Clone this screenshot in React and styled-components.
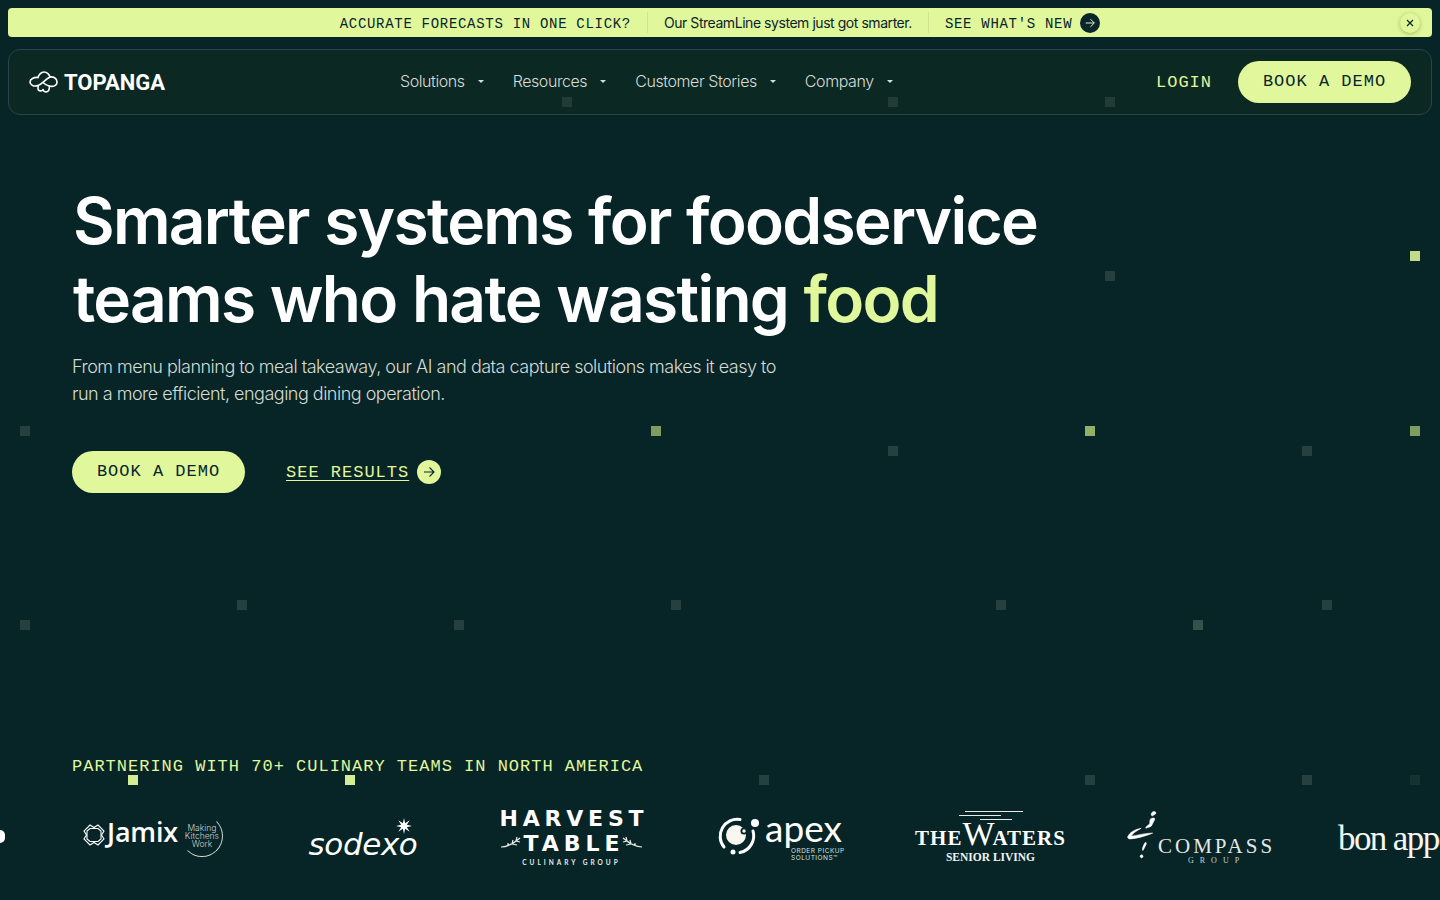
import React from 'react';
import styled, { createGlobalStyle } from 'styled-components';

const lime = '#e0f79b';
const ink = '#08252a';
const mono = '"Liberation Mono", monospace';
const sans = 'Inter, "Liberation Sans", sans-serif';
const serif = '"Liberation Serif", serif';

const Global = createGlobalStyle`
  html, body { margin: 0; padding: 0; background: #072426; }
  * { box-sizing: border-box; }
`;

const Page = styled.div`
  position: relative;
  width: 1440px;
  height: 900px;
  overflow: hidden;
  background: #072426;
  padding: 8px;
  font-family: ${sans};
  color: #fff;
`;

const Square = styled.i`
  position: absolute;
  width: 10px;
  height: 10px;
  left: ${p => p.$x - 5}px;
  top: ${p => p.$y - 5}px;
  background: ${p => p.$c};
`;

const Banner = styled.div`
  position: relative;
  height: 29px;
  border-radius: 4px;
  background: ${lime};
  display: flex;
  align-items: center;
  justify-content: center;
  color: ${ink};
`;
const BannerMono = styled.span`
  font: 400 14px/1 ${mono};
  letter-spacing: 0.7px;
  white-space: pre;
  position: relative;
  top: 1px;
`;
const BannerText = styled.span`
  font-size: 14px;
  letter-spacing: -0.45px;
  line-height: 1;
  padding: 0 16px;
  margin: 0 16px 0 16px;
  height: 21px;
  display: flex;
  align-items: center;
  border-left: 1px solid #cfe48e;
  border-right: 1px solid #cfe48e;
  font-weight: 400;
`;
const BannerLink = styled.span`
  display: flex;
  align-items: center;
  gap: 8px;
`;
const DarkDot = styled.span`
  width: 20px;
  height: 20px;
  border-radius: 50%;
  background: ${ink};
  display: flex;
  align-items: center;
  justify-content: center;
`;
const Close = styled.button`
  position: absolute;
  right: 12px;
  top: 5px;
  width: 20px;
  height: 20px;
  padding: 0;
  border: 0;
  border-radius: 50%;
  background: ${lime};
  box-shadow: 0 1px 4px rgba(90, 110, 40, .45);
  display: flex;
  align-items: center;
  justify-content: center;
`;

const Nav = styled.nav`
  position: relative;
  margin-top: 12px;
  height: 66px;
  border: 1px solid #2a4547;
  border-radius: 12px;
  background: rgba(25, 50, 30, .3);
  display: grid;
  grid-template-columns: 371px 1fr auto;
  align-items: center;
  padding: 0 20px 0 20px;
`;
const Brand = styled.div`
  display: flex;
  align-items: center;
  gap: 6px;
`;
const BrandName = styled.span`
  font: 700 22px/1 Roboto, ${sans};
  color: #fff;
  position: relative;
  top: 1px;
`;
const Menu = styled.div`
  display: flex;
  gap: 29px;
  position: relative;
  top: -1px;
`;
const MenuItem = styled.span`
  display: flex;
  align-items: center;
  gap: 13px;
  font-size: 16px;
  font-weight: 300;
  color: #d6ddd7;
  letter-spacing: -0.42px;
  line-height: 20px;
`;
const Caret = styled.i`
  width: 0;
  height: 0;
  border-left: 3.5px solid transparent;
  border-right: 3.5px solid transparent;
  border-top: 3.5px solid #d6ddd7;
`;
const Actions = styled.div`
  display: flex;
  align-items: center;
  gap: 26px;
`;
const Login = styled.span`
  font: 400 17px/1 ${mono};
  letter-spacing: 1px;
  color: ${lime};
`;
const Pill = styled.span`
  height: 42px;
  width: 173px;
  border-radius: 21px;
  background: ${lime};
  color: ${ink};
  font: 400 17px/42px ${mono};
  letter-spacing: 1px;
  text-align: center;
  white-space: pre;
  display: block;
`;

const Hero = styled.section`
  position: relative;
  padding: 67px 0 0 65px;
`;
const Title = styled.h1`
  margin: 0;
  font-size: 64px;
  line-height: 78px;
  font-weight: 600;
  letter-spacing: -1.72px;
  word-spacing: 1px;
  color: #fff;
`;
const Accent = styled.span`
  color: ${lime};
`;
const Lead = styled.p`
  margin: 15px 0 0 -1px;
  font-size: 18px;
  line-height: 27px;
  font-weight: 300;
  letter-spacing: -0.5px;
  color: #d5dcd6;
`;
const Cta = styled.div`
  display: flex;
  align-items: center;
  gap: 41px;
  margin: 44px 0 0 -1px;
`;
const Results = styled.span`
  display: flex;
  align-items: center;
  gap: 8px;
`;
const ResultsText = styled.span`
  font: 400 17px/1 ${mono};
  letter-spacing: 1px;
  color: ${lime};
  text-decoration: underline;
  text-decoration-thickness: 1px;
  text-underline-offset: 3px;
`;
const LimeDot = styled(DarkDot)`
  width: 24px;
  height: 24px;
  background: ${lime};
`;

const Partners = styled.section`
  position: absolute;
  left: 0;
  right: 0;
  top: 757px;
`;
const PartnerLabel = styled.div`
  margin-left: 72px;
  font: 400 17px/19px ${mono};
  letter-spacing: 1px;
  color: ${lime};
`;
const Strip = styled.div`
  display: flex;
  align-items: center;
  height: 66px;
  margin-top: 28px;
  white-space: nowrap;
`;
const Slot = styled.div`
  flex: 0 0 ${p => p.$w}px;
  display: flex;
  align-items: center;
  color: #fff;
`;
const JamixSvg = styled.svg`
  margin-top: -5px;
  flex: none;
`;
const Jamix = styled.span`
  font: 600 27px/1 "Open Sans", sans-serif;
  letter-spacing: -0.2px;
  margin-left: 2px;
  position: relative;
  top: -6px;
`;
const KitchenBadge = styled.span`
  width: 42px;
  height: 42px;
  margin-left: 3px;
  border: 1px solid transparent;
  border-right-color: #cfd8d6;
  border-bottom-color: #cfd8d6;
  border-radius: 50%;
  font: 300 8.5px/8px ${sans};
  color: #cdd6d4;
  display: flex;
  align-items: center;
  justify-content: center;
  text-align: center;
  white-space: pre;
  position: relative;
  top: -1px;
`;
const Sodexo = styled.span`
  font: oblique 400 31px/26px "DejaVu Sans", sans-serif;
  letter-spacing: -0.4px;
  margin-top: -3px;
`;
const StarRow = styled.div`
  align-self: flex-end;
  margin-right: 6px;
  line-height: 0;
`;
const Stack = styled.div`
  display: flex;
  flex-direction: column;
  align-items: center;
  width: ${p => p.$w}px;
`;
const HarvestLine = styled.span`
  font: 700 22px/25px "DejaVu Sans", sans-serif;
  letter-spacing: ${p => p.$s}px;
  margin-right: -${p => p.$s}px;
`;
const HarvestMid = styled.div`
  display: flex;
  align-items: center;
  gap: 1px;
`;
const HarvestSub = styled.span`
  font: 700 6.5px/13px Lato, sans-serif;
  letter-spacing: 3px;
  color: #e6ebe8;
`;
const ApexCol = styled.div`
  display: flex;
  flex-direction: column;
  margin-left: 5px;
`;
const ApexWord = styled.span`
  font: 400 37px/29px Lato, sans-serif;
  letter-spacing: 0;
`;
const ApexSub = styled.span`
  font: 400 6.5px/7px ${sans};
  letter-spacing: .5px;
  margin-left: 26px;
  margin-top: 6px;
  color: #d9e0de;
  white-space: pre;
`;
const Waters = styled.span`
  font: 700 21px/22px ${serif};
  letter-spacing: 1px;
  margin-top: 1px;
`;
const BigW = styled.span`
  font-size: 34px;
  font-weight: 400;
  letter-spacing: -2px;
`;
const WatersSub = styled.span`
  font: 700 11.5px/13px ${serif};
  color: #f2f4f2;
  margin-top: 2px;
`;
const CompassCol = styled.div`
  display: flex;
  flex-direction: column;
  align-items: center;
  margin-left: -3px;
  padding-top: 26px;
`;
const CompassWord = styled.span`
  font: 400 21px/20px ${serif};
  letter-spacing: 3px;
  color: #e3e9e6;
`;
const CompassSub = styled.span`
  font: 400 8px/9px ${serif};
  letter-spacing: 6px;
  color: #c9d2cf;
`;
const BonApp = styled.span`
  font: 400 35px/1 ${serif};
  letter-spacing: -1.6px;
  color: #f4f6f4;
  position: relative;
  top: 1px;
`;
const Blob = styled.i`
  width: 5px;
  height: 13px;
  background: #fff;
  border-radius: 0 6px 6px 0;
  position: relative;
  top: -1px;
`;

const dim = '#25403f';
const squares = [
  [567, 102, dim], [893, 102, dim], [1110, 102, dim], [1110, 276, dim],
  [1415, 256, '#c3da88'], [25, 431, dim], [656, 431, '#7f9d5f'], [1090, 431, '#93b068'],
  [1415, 431, '#7f9d5f'], [893, 451, dim], [1307, 451, dim], [242, 605, dim],
  [676, 605, dim], [1001, 605, dim], [1327, 605, dim], [25, 625, dim],
  [459, 625, dim], [1198, 625, '#34524a'], [133, 780, '#d4ec94'], [350, 780, '#d4ec94'],
  [764, 780, dim], [1090, 780, dim], [1307, 780, dim], [1415, 780, '#153232'],
];

const Arrow = ({ c, s = 14 }) => (
  <svg width={s} height={s} viewBox="0 0 14 14" fill="none" stroke={c} strokeWidth="1.1">
    <path d="M2 7h10M7.5 2.5 12 7l-4.5 4.5" />
  </svg>
);

const TopangaMark = () => (
  <svg width="29" height="22" viewBox="0 0 29 22" fill="none" stroke="#fff" strokeWidth="1.6" strokeLinejoin="round" strokeLinecap="round">
    <path d="M9 6.500C9.500 4 12 1 15 1c3 0 5.500 2.500 6 5" />
    <path d="M20.500 15c0 3-.5 6-3.500 6-1.500 0-2.500-1-3-2.500-1 2-5 2-5-1 0-1 .2-2 .2-3" />
    <path d="M9 6.500C5 6 1 8 1 11s4 5 8 3.500c4-1.500 7-6 12-8.500 3-.5 7 1 7 5s-4 5-8 4c-3-1-4.500-2-6-3.500" />
  </svg>
);

const JamixMark = () => (
  <JamixSvg width="22" height="22" viewBox="0 0 22 22" fill="none" stroke="#fff" strokeWidth="1.1">
    <path d="M7 1l4 2.500L15 1l6 6-2.500 4L21 15l-6 6-4-2.500L7 21l-6-6 2.500-4L1 7Z" />
    <path d="M7 4.500h8L18 7v8l-3 2.500H7L4 15V7Z" />
  </JamixSvg>
);

const SodexoStar = () => (
  <svg width="16" height="16" viewBox="0 0 14 14" fill="#fff">
    <path d="M7 0l1 4.500L12 2 9.500 6 14 7l-4.500 1.200L12 12 8 9.500 7 14l-1-4.500L2 12l2.500-3.800L0 7l4.500-1L2 2l4 2.500Z" />
  </svg>
);

const Leaf = ({ flip }) => (
  <svg width="22" height="14" viewBox="0 0 22 14" fill="none" stroke="#e8ece9" strokeWidth="1.200" style={flip ? { transform: 'scaleX(-1)' } : undefined}>
    <path d="M21 11C14 11 9 8 2 2M6 5 5 1M6 5 2 6M10 8l-1-4M10 8 5 9M14 10l0-3" />
  </svg>
);

const ApexMark = () => (
  <svg width="42" height="40" viewBox="0 0 42 40" fill="none">
    <path d="M22 2.500A17 17 0 0 0 6 30" stroke="#fff" strokeWidth="3" strokeLinecap="round" />
    <path d="M35 14a17 17 0 0 1-13 21.500" stroke="#fff" strokeWidth="3" strokeLinecap="round" />
    <circle cx="15" cy="35" r="2.500" fill="#fff" />
    <circle cx="37" cy="6" r="4" fill="#fff" />
    <circle cx="18" cy="18" r="10" fill="#f8f7f0" />
    <circle cx="26" cy="14" r="3.500" fill="#072426" />
    <circle cx="26" cy="14" r="1.700" fill="#fff" />
  </svg>
);

const WatersLines = () => (
  <svg width="74" height="11" viewBox="0 0 74 11" fill="none" stroke="#e6ebe8" strokeWidth="1">
    <path d="M11 .500h58M5 4.500h42M26 8.500h32" />
  </svg>
);

const CompassMark = () => (
  <svg width="34" height="52" viewBox="0 0 34 54" fill="#fff" stroke="#fff" strokeWidth=".6">
    <path d="M26 1c2-1 4 0 3 2l-3 2c-2 0-2-3 0-4ZM24 8c2-1 5-1 4 1l-3 6c-1 2-5 2-6 3-1-2 3-3 4-5 0-2 0-4 1-5ZM0 27c2-5 8-8 14-9-3 2-8 4-10 8 4 0 12-3 22-3-7 3-18 6-24 6-1 0-2-1-2-2ZM18 33c1-1 2 0 1 2l-3 6c-1 0-1-3 2-8ZM13 47a1.500 1.500 0 1 1 0 .1Z" />
  </svg>
);

export default function App() {
  return (
    <Page>
      <Global />
      {squares.map(([x, y, c]) => <Square key={`${x}-${y}`} $x={x} $y={y} $c={c} />)}
      <Banner>
        <BannerMono>ACCURATE FORECASTS IN ONE CLICK?</BannerMono>
        <BannerText>Our StreamLine system just got smarter.</BannerText>
        <BannerLink>
          <BannerMono>SEE WHAT'S NEW</BannerMono>
          <DarkDot><Arrow c="#f2f8d8" s={12} /></DarkDot>
        </BannerLink>
        <Close aria-label="Close">
          <svg width="8" height="8" viewBox="0 0 8 8" stroke={ink} strokeWidth="1.200"><path d="M1 1l6 6M7 1 1 7" /></svg>
        </Close>
      </Banner>
      <Nav>
        <Brand><TopangaMark /><BrandName>TOPANGA</BrandName></Brand>
        <Menu>
          {['Solutions', 'Resources', 'Customer Stories', 'Company'].map(t => (
            <MenuItem key={t}>{t}<Caret /></MenuItem>
          ))}
        </Menu>
        <Actions>
          <Login>LOGIN</Login>
          <Pill>BOOK A DEMO</Pill>
        </Actions>
      </Nav>
      <Hero>
        <Title>Smarter systems for foodservice<br />teams who hate wasting <Accent>food</Accent></Title>
        <Lead>From menu planning to meal takeaway, our AI and data capture solutions makes it easy to<br />run a more efficient, engaging dining operation.</Lead>
        <Cta>
          <Pill>BOOK A DEMO</Pill>
          <Results>
            <ResultsText>SEE RESULTS</ResultsText>
            <LimeDot><Arrow c={ink} s={14} /></LimeDot>
          </Results>
        </Cta>
      </Hero>
      <Partners>
        <PartnerLabel>PARTNERING WITH 70+ CULINARY TEAMS IN NORTH AMERICA</PartnerLabel>
        <Strip>
          <Slot $w={83}><Blob /></Slot>
          <Slot $w={225}>
            <JamixMark /><Jamix>Jamix</Jamix>
            <KitchenBadge>{'Making\nKitchens\nWork'}</KitchenBadge>
          </Slot>
          <Slot $w={190}>
            <Stack $w={110}>
              <StarRow><SodexoStar /></StarRow>
              <Sodexo>sodexo</Sodexo>
            </Stack>
          </Slot>
          <Slot $w={220}>
            <Stack $w={147}>
              <HarvestLine $s={4.8}>HARVEST</HarvestLine>
              <HarvestMid><Leaf flip /><HarvestLine $s={5}>TABLE</HarvestLine><Leaf /></HarvestMid>
              <HarvestSub>CULINARY GROUP</HarvestSub>
            </Stack>
          </Slot>
          <Slot $w={199}>
            <ApexMark />
            <ApexCol>
              <ApexWord>apex</ApexWord>
              <ApexSub>{'ORDER PICKUP\nSOLUTIONS™'}</ApexSub>
            </ApexCol>
          </Slot>
          <Slot $w={210}>
            <Stack $w={147}>
              <WatersLines />
              <Waters>THE<BigW>W</BigW>ATERS</Waters>
              <WatersSub>SENIOR LIVING</WatersSub>
            </Stack>
          </Slot>
          <Slot $w={211}>
            <CompassMark />
            <CompassCol>
              <CompassWord>COMPASS</CompassWord>
              <CompassSub>GROUP</CompassSub>
            </CompassCol>
          </Slot>
          <Slot $w={120}><BonApp>bon appétit</BonApp></Slot>
        </Strip>
      </Partners>
    </Page>
  );
}
